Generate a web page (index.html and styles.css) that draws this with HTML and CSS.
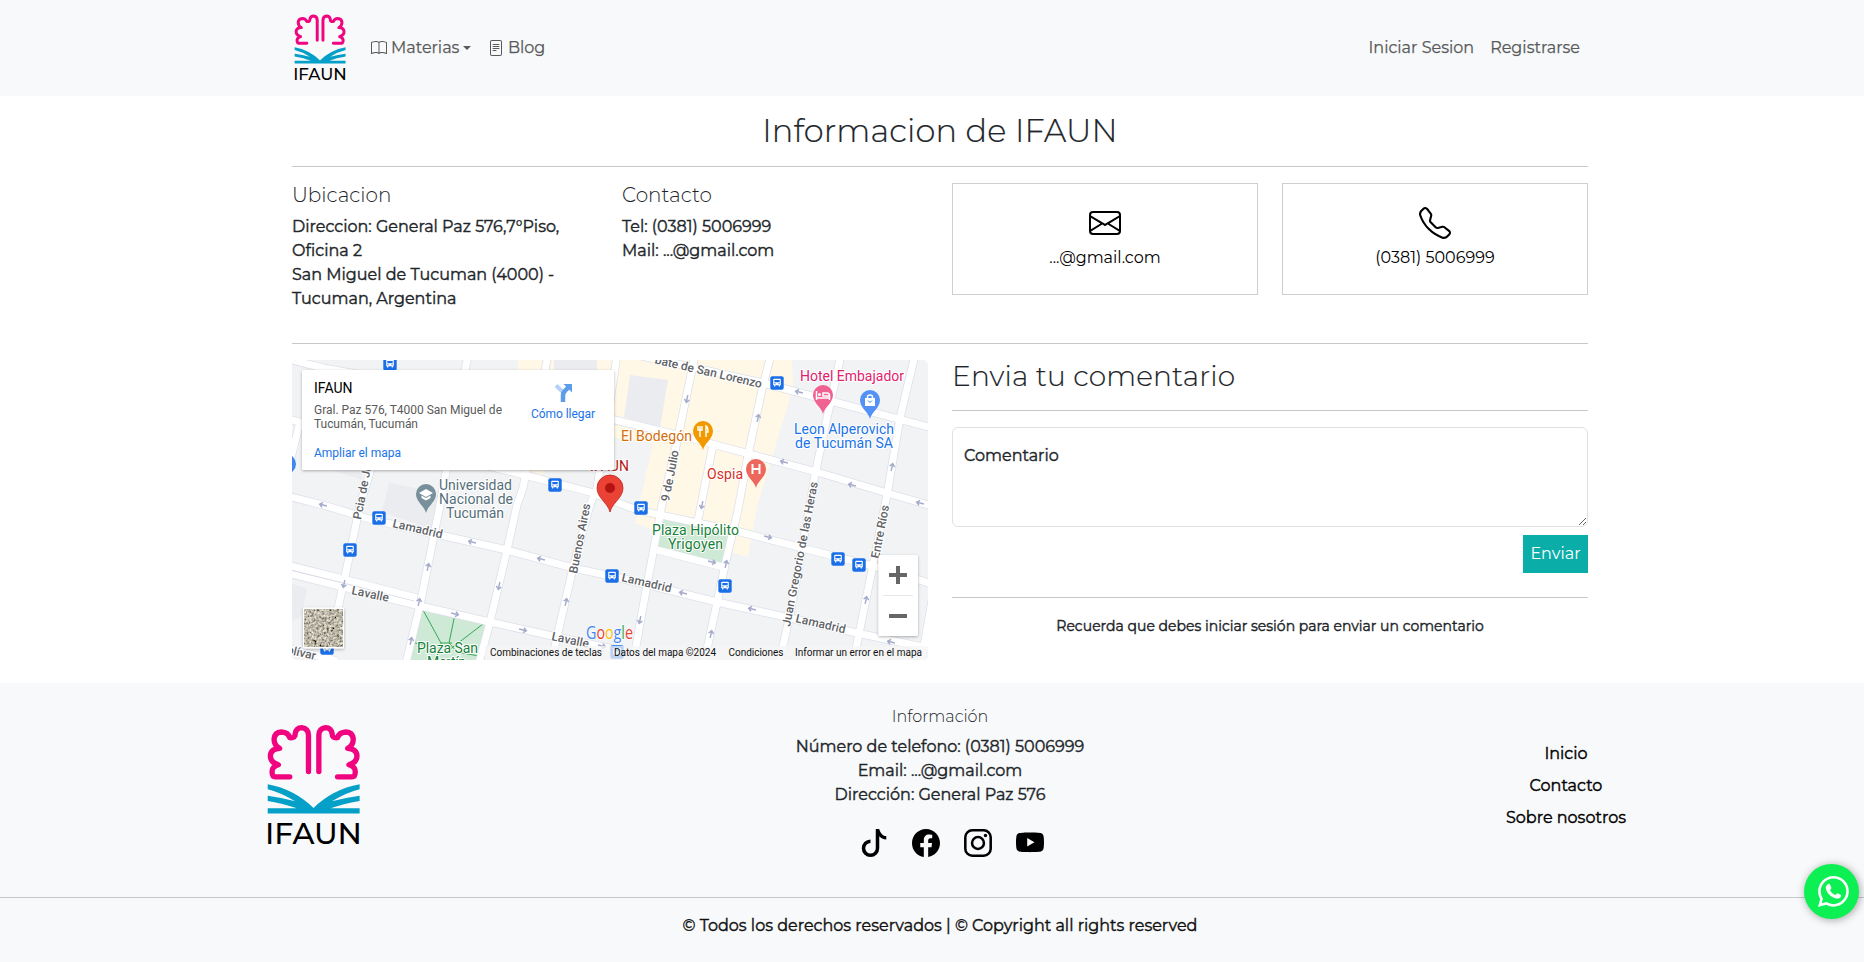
FILE: index.html
```html
<!DOCTYPE html>
<html lang="es">
<head>
<meta charset="utf-8">
<title>IFAUN</title>
<link rel="stylesheet" href="styles.css">
</head>
<body>
<svg width="0" height="0" class="defs" aria-hidden="true">
  <defs>
    <symbol id="logo" viewBox="83 73 278 362">
      <g fill="none" stroke="#f0047f" stroke-width="16" stroke-linecap="round" stroke-linejoin="round">
        <path id="half" d="M151 231H108Q98 231 98 215Q98 201 117 195Q93 188 93 169Q93 148 121 146Q104 138 104 118Q106 98 126 97Q146 98 151 114Q168 116 167 103Q170 84 187 84Q206 86 207 106V215"/>
        <use href="#half" transform="translate(445 0) scale(-1 1)"/>
      </g>
      <path fill="#04a0c8" d="M85 253Q165 268 222 324Q279 268 360 253V268Q320 278 277 304Q318 294 360 288V303Q310 312 273 325H360V341H85V325H172Q135 312 85 303V288Q127 294 167 304Q125 278 85 268Z"/>
      <text x="77" y="432" font-size="88" font-weight="550" fill="#000" textLength="290" lengthAdjust="spacingAndGlyphs">IFAUN</text>
    </symbol>
    <symbol id="bus" viewBox="0 0 14 14">
      <rect x=".3" y=".3" width="13.4" height="13.4" rx="2" fill="#1a6fe8"/>
      <path fill="#fff" d="M4.2 2.7h5.6q1 0 1 1v5.6H9.9v1.2H8.7V9.3H5.3v1.2H4.1V9.3h-.9V3.700q0-1 1-1z"/>
      <path fill="#1a6fe8" d="M4.300 3.900h5.400v2.400H4.300zM4.300 7.300h1.200v1H4.300zM8.500 7.300h1.200v1H8.500z"/>
    </symbol>
    <path id="arrow" d="M-4 0H3M.5-2.500 3.400 0 .5 2.500" fill="none" stroke="#a5abcb" stroke-width="1.500"/>
    <path id="pin" d="M0 19C-1.500 12-10 8-10 0A10 10 0 0 1 10 0C10 8 1.500 12 0 19Z"/>
  </defs>
</svg>

<nav class="navbar">
  <a class="brand"><svg class="logo-sm"><use href="#logo"/></svg></a>
  <a class="nav-link"><svg class="i16" viewBox="0 0 16 16"><path d="M1 2.828c.885-.37 2.154-.769 3.388-.893 1.330-.134 2.458.063 3.112.752v9.746c-.935-.53-2.120-.603-3.213-.493-1.180.12-2.370.461-3.287.811V2.828zm7.500-.141c.654-.689 1.782-.886 3.112-.752 1.234.124 2.503.523 3.388.893v9.923c-.918-.35-2.107-.692-3.287-.81-1.094-.111-2.278-.039-3.213.492V2.687zM8 1.783C7.015.936 5.587.81 4.287.94c-1.514.153-3.042.672-3.994 1.105A.5.5 0 0 0 0 2.500v11a.5.5 0 0 0 .707.455c.882-.4 2.303-.881 3.680-1.020 1.409-.142 2.590.087 3.223.877a.5.5 0 0 0 .78 0c.633-.79 1.814-1.019 3.222-.877 1.378.139 2.800.62 3.681 1.020A.5.5 0 0 0 16 13.500v-11a.5.5 0 0 0-.293-.455c-.952-.433-2.480-.952-3.994-1.105C10.413.809 8.985.936 8 1.783z"/></svg><span>Materias</span><i class="caret"></i></a>
  <a class="nav-link nav-blog"><svg class="i16" viewBox="0 0 16 16"><path d="M5 4a.5.5 0 0 0 0 1h6a.5.5 0 0 0 0-1H5zm-.5 2.500A.5.5 0 0 1 5 6h6a.5.5 0 0 1 0 1H5a.5.5 0 0 1-.5-.5zM5 8a.5.5 0 0 0 0 1h6a.5.5 0 0 0 0-1H5zm0 2a.5.5 0 0 0 0 1h3a.5.5 0 0 0 0-1H5z"/><path d="M2 2a2 2 0 0 1 2-2h8a2 2 0 0 1 2 2v12a2 2 0 0 1-2 2H4a2 2 0 0 1-2-2V2zm10-1H4a1 1 0 0 0-1 1v12a1 1 0 0 0 1 1h8a1 1 0 0 0 1-1V2a1 1 0 0 0-1-1z"/></svg><span>Blog</span></a>
  <div class="nav-right"><a>Iniciar Sesion</a><a>Registrarse</a></div>
</nav>

<main class="container">
  <h2 class="title">Informacion de IFAUN</h2>
  <hr>
  <section class="info">
    <div>
      <h5>Ubicacion</h5>
      <p>Direccion: General Paz 576,7°Piso, Oficina 2</p>
      <p>San Miguel de Tucuman (4000) - Tucuman, Argentina</p>
    </div>
    <div>
      <h5>Contacto</h5>
      <p>Tel: (0381) 5006999</p>
      <p>Mail: ...@gmail.com</p>
    </div>
    <a class="card">
      <svg class="i32" viewBox="0 0 16 16"><path d="M0 4a2 2 0 0 1 2-2h12a2 2 0 0 1 2 2v8a2 2 0 0 1-2 2H2a2 2 0 0 1-2-2V4Zm2-1a1 1 0 0 0-1 1v.217l7 4.200 7-4.200V4a1 1 0 0 0-1-1H2Zm13 2.383-4.708 2.825L15 11.105V5.383Zm-.034 6.876-5.640-3.471L8 9.583l-1.326-.795-5.640 3.470A1 1 0 0 0 2 13h12a1 1 0 0 0 .966-.741ZM1 11.105l4.708-2.897L1 5.383v5.722Z"/></svg>
      <span>...@gmail.com</span>
    </a>
    <a class="card">
      <svg class="i32" viewBox="0 0 16 16"><path d="M3.654 1.328a.678.678 0 0 0-1.015-.063L1.605 2.300c-.483.484-.661 1.169-.45 1.770a17.568 17.568 0 0 0 4.168 6.608 17.569 17.569 0 0 0 6.608 4.168c.601.211 1.286.033 1.770-.45l1.034-1.034a.678.678 0 0 0-.063-1.015l-2.307-1.794a.678.678 0 0 0-.58-.122l-2.190.547a1.745 1.745 0 0 1-1.657-.459L5.482 8.062a1.745 1.745 0 0 1-.46-1.657l.548-2.190a.678.678 0 0 0-.122-.58L3.654 1.328zM1.884.511a1.745 1.745 0 0 1 2.612.163L6.290 2.980c.329.423.445.974.315 1.494l-.547 2.190a.678.678 0 0 0 .178.643l2.457 2.457a.678.678 0 0 0 .644.178l2.189-.547a1.745 1.745 0 0 1 1.494.315l2.306 1.794c.829.645.905 1.870.163 2.611l-1.034 1.034c-.74.74-1.846 1.065-2.877.702a18.634 18.634 0 0 1-7.010-4.420 18.634 18.634 0 0 1-4.420-7.009c-.362-1.030-.037-2.137.703-2.877L1.885.511z"/></svg>
      <span>(0381) 5006999</span>
    </a>
  </section>
  <hr>
  <section class="lower">
    <svg class="map" viewBox="0 0 636 300">
      <defs>
        <filter id="sat" x="0" y="0" width="1" height="1"><feTurbulence type="fractalNoise" baseFrequency=".4" numOctaves="3" seed="4"/><feColorMatrix values="1.2 .8 0 0 -.5  1.1 .8 0 0 -.48  1 .7 0 0 -.46  0 0 0 0 1"/></filter>
        <filter id="shade" x="-20%" y="-20%" width="140%" height="140%"><feDropShadow dx="0" dy="1" stdDeviation="1.500" flood-opacity=".3"/></filter>
        <g id="roads">
          <path d="M-5 2 0 0 31 8 323 60 398 78 525 112 595 133 640 146M340-6 471 23 640 68M-5 59 221 112 298 132 345 150 448 172 518 190 585 207 640 224M-5 136 31 145 81 160 148 175 215 190 281 208 328 218 425 242 498 258 565 273 640 289M-5 205 51 219 125 238M-5 213 51 227 128 246 198 262 265 277 335 292M-5 288 45 301M365 190 431 207"/>
          <path d="M101-5 78 112 68 145 51 226 46 248 34 303M8 62-4 110M176-5 151 128 148 145 128 245 114 303M256-5 231 128 225 145 215 190 198 262 187 303M325-5 305 128 298 145 281 208 265 277 259 303M403-5 385 82 370 145 355 225 341 303M421 85 406 160M479-5 471 25 456 95 446 150 433 205 426 238 412 303M549-5 535 58 523 115 518 145 498 255 487 303M623-5 608 58 595 135 581 205 561 303M640 240 629 303"/>
        </g>
      </defs>
      <rect width="636" height="300" fill="#f1f3f5"/>
      <path fill="#fff8e7" d="M226 0H500L501 28 465 147 456 197 437 192 433 212 360 193 362 170 343 163 361 83 323 78 300 74V12H226ZM236 110H252L248 121 236 118Z"/>
      <path fill="#ebecf0" d="M338 15 376 20 368 68 332 57ZM97 123 151 133 143 170 90 152ZM40 110H70V120ZM0 224 15 228 10 255 0 262ZM262 0H305V12H262Z"/>
      <path fill="#cee9d6" d="M373 155 441 171 431 203 364 188ZM129 247 196 263 186 300H117Z"/>
      <path fill="none" stroke="#34a853" d="M131 250 149 283 144 300M163 254 157 283 165 292 187 296M191 264 157 290M149 283H160M119 282 132 285"/>
      <use href="#roads" fill="none" stroke="#dde0e9" stroke-width="8.500"/>
      <use href="#roads" fill="none" stroke="#fff" stroke-width="7"/>
      <path stroke="#dde0e9" d="M-2 210 51 223 122 241" fill="none"/>
      <g>
        <use href="#arrow" transform="translate(31 145) rotate(193)"/><use href="#arrow" transform="translate(180 182) rotate(193)"/><use href="#arrow" transform="translate(249 199) rotate(193)"/><use href="#arrow" transform="translate(136 207) rotate(-78)"/><use href="#arrow" transform="translate(207 226) rotate(102)"/><use href="#arrow" transform="translate(274 242) rotate(-78)"/><use href="#arrow" transform="translate(52 224) rotate(102)"/><use href="#arrow" transform="translate(127 242) rotate(-78)"/><use href="#arrow" transform="translate(163 254) rotate(13)"/><use href="#arrow" transform="translate(231 270) rotate(13)"/><use href="#arrow" transform="translate(119 281) rotate(-78)"/><use href="#arrow" transform="translate(310 286) rotate(13)"/>
        <use href="#arrow" transform="translate(395 39) rotate(102)"/><use href="#arrow" transform="translate(466 58) rotate(-78)"/><use href="#arrow" transform="translate(507 32) rotate(193)"/><use href="#arrow" transform="translate(492 102) rotate(193)"/><use href="#arrow" transform="translate(560 125) rotate(193)"/><use href="#arrow" transform="translate(628 143) rotate(193)"/><use href="#arrow" transform="translate(600 107) rotate(-78)"/><use href="#arrow" transform="translate(410 145) rotate(102)"/><use href="#arrow" transform="translate(476 177) rotate(13)"/><use href="#arrow" transform="translate(420 202) rotate(13)"/><use href="#arrow" transform="translate(434 204) rotate(-78)"/><use href="#arrow" transform="translate(391 233) rotate(193)"/><use href="#arrow" transform="translate(460 249) rotate(193)"/><use href="#arrow" transform="translate(348 260) rotate(102)"/><use href="#arrow" transform="translate(419 274) rotate(-78)"/><use href="#arrow" transform="translate(574 240) rotate(-78)"/><use href="#arrow" transform="translate(599 282) rotate(193)"/>
      </g>
      <g class="street">
        <text transform="translate(469 28) rotate(13)" text-anchor="end">bate de San Lorenzo</text>
        <text transform="translate(100 167) rotate(13)" textLength="51">Lamadrid</text>
        <text transform="translate(59 234) rotate(12)" textLength="38">Lavalle</text>
        <text transform="translate(259 280) rotate(12)" textLength="38">Lavalle</text>
        <text transform="translate(329 221) rotate(13)" textLength="51">Lamadrid</text>
        <text transform="translate(503 262) rotate(13)" textLength="51">Lamadrid</text>
        <text transform="translate(23 300) rotate(13)" text-anchor="end">Bolívar</text>
        <text transform="translate(69 160) rotate(-79)">Pcia de Jujuy</text>
        <text transform="translate(285 214) rotate(-79)" textLength="71">Buenos Aires</text>
        <text transform="translate(377 142) rotate(-79)" textLength="52">9 de Julio</text>
        <text transform="translate(498 267) rotate(-79)" textLength="147">Juan Gregorio de las Heras</text>
        <text transform="translate(587 199) rotate(-79)" textLength="54">Entre Ríos</text>
      </g>
      <use href="#bus" x="91" y="-3" width="14" height="14"/><use href="#bus" x="256" y="118" width="14" height="14"/><use href="#bus" x="80" y="151" width="14" height="14"/><use href="#bus" x="51" y="183" width="14" height="14"/><use href="#bus" x="313" y="209" width="14" height="14"/><use href="#bus" x="28" y="281" width="14" height="14"/><use href="#bus" x="478" y="16" width="14" height="14"/><use href="#bus" x="342" y="141" width="14" height="14"/><use href="#bus" x="426" y="219" width="14" height="14"/><use href="#bus" x="539" y="192" width="14" height="14"/><use href="#bus" x="560" y="198" width="14" height="14"/><use href="#bus" x="318" y="285" width="14" height="14"/>
      <circle cx="-6" cy="104" r="10" fill="#4285f4"/>
      <g class="pins">
        <use href="#pin" x="134" y="134" fill="#78909c"/><path fill="#fff" d="M134 129 141 133 134 137 127 133ZM129.500 135.500 134 138 138.500 135.500V138L134 140.500 129.500 138Z"/>
        <use href="#pin" x="411" y="71" fill="#f29900"/><path stroke="#fff" fill="none" stroke-width="1.400" d="M408 66V77M406 66V70H410V66M414 77V66Q416 67 416 72H414"/>
        <use href="#pin" x="464" y="109" fill="#ee675c"/><path stroke="#fff" fill="none" stroke-width="2" d="M460.500 104V114M467.500 104V114M460.500 109H467.500"/>
        <use href="#pin" x="531" y="35" fill="#f06292"/><path stroke="#fff" fill="none" stroke-width="1.500" d="M524.500 31V40M524.500 38H537.500V40V36H531V33H535Q537.500 33 537.500 36"/><circle cx="527.500" cy="34.500" r="1.500" fill="#fff"/>
        <use href="#pin" x="578" y="40" fill="#5491f5"/><path fill="#fff" d="M573 38H583V46H573Z"/><path stroke="#fff" fill="none" stroke-width="1.400" d="M575.500 39V37Q575.500 35 578 35T580.500 37V39"/><path d="M576 40.500Q578 44 580 40.500" fill="none" stroke="#5491f5"/>
        <path d="M318 152C316 143 305 138 305 128A13 13 0 0 1 331 128C331 138 320 143 318 152Z" fill="#ea4335" stroke="#c5221f" stroke-width=".8"/><circle cx="318" cy="128" r="5" fill="#b31412"/>
      </g>
      <g class="poi">
        <text x="147" y="130" textLength="73" fill="#546e7a">Universidad</text><text x="147" y="144" textLength="74" fill="#546e7a">Nacional de</text><text x="154" y="158" textLength="58" fill="#546e7a">Tucumán</text>
        <text x="329" y="81" textLength="71" fill="#d56e0c">El Bodegón</text>
        <text x="415" y="119" textLength="36" fill="#d93025">Ospia</text>
        <text x="508" y="21" textLength="104" fill="#e0216c">Hotel Embajador</text>
        <text x="502" y="74" textLength="100" fill="#1a73e8">Leon Alperovich</text><text x="503" y="88" textLength="98" fill="#1a73e8">de Tucumán SA</text>
        <text x="360" y="175" textLength="87" fill="#188038">Plaza Hipólito</text><text x="376" y="189" textLength="55" fill="#188038">Yrigoyen</text>
        <text x="125" y="293" textLength="61" fill="#188038">Plaza San</text><text x="135" y="307" textLength="39" fill="#188038">Martín</text>
        <text x="298" y="111" textLength="39" fill="#b31412">IFAUN</text>
      </g>
      <text class="google" x="294" y="279" textLength="47" lengthAdjust="spacingAndGlyphs"><tspan fill="#4285f4">G</tspan><tspan fill="#ea4335">o</tspan><tspan fill="#fbbc04">o</tspan><tspan fill="#4285f4">g</tspan><tspan fill="#34a853">l</tspan><tspan fill="#ea4335">e</tspan></text>
      <path fill="#f5f5f5" fill-opacity=".75" d="M193 286H636V300H193Z"/>
      <g class="attrib">
        <text x="198" y="296" textLength="112">Combinaciones de teclas</text><text x="322" y="296" textLength="102">Datos del mapa ©2024</text><text x="436.500" y="296" textLength="55">Condiciones</text><text x="503" y="296" textLength="127">Informar un error en el mapa</text>
      </g>
      <g filter="url(#shade)"><rect x="10" y="10" width="312" height="100" rx="1.500" fill="#fff"/></g>
      <g class="place">
        <text x="22" y="32.500" font-size="14" fill="#000" textLength="38.500">IFAUN</text>
        <text x="22" y="54" fill="#5b5b5b" textLength="188">Gral. Paz 576, T4000 San Miguel de</text>
        <text x="22" y="68" fill="#5b5b5b" textLength="104">Tucumán, Tucumán</text>
        <text x="22" y="97" fill="#1a73e8" textLength="87">Ampliar el mapa</text>
        <text x="239" y="58" fill="#1a73e8" textLength="64">Cómo llegar</text>
      </g>
      <path d="M264 25.500 271 32V37" fill="none" stroke="#b5d1f7" stroke-width="4"/><path d="M271 42V35Q271 32 277 27" fill="none" stroke="#5c9ce8" stroke-width="4.500"/><path fill="#5c9ce8" d="M271.500 24H280V32.500Z"/>
      <g filter="url(#shade)"><rect x="11" y="247.500" width="41" height="41" rx="1.500" fill="#fff"/><rect x="586.500" y="195" width="39.500" height="81" rx="2" fill="#fff"/></g>
      <rect x="12.500" y="249" width="38" height="38" filter="url(#sat)"/>
      <path d="M591 235.500H621" stroke="#e6e6e6"/>
      <path d="M597 215H615M606 206V224M597 256H615" stroke="#666" stroke-width="4"/>
    </svg>
    <div class="form">
      <h3>Envia tu comentario</h3>
      <hr>
      <textarea placeholder="Comentario"></textarea>
      <button>Enviar</button>
      <hr class="hr-form">
      <p class="note">Recuerda que debes iniciar sesión para enviar un comentario</p>
    </div>
  </section>
</main>

<footer>
  <div class="foot">
    <div class="foot-logo"><svg class="logo-lg"><use href="#logo"/></svg></div>
    <div class="foot-info">
      <h6>Información</h6>
      <p>Número de telefono: (0381) 5006999</p>
      <p>Email: ...@gmail.com</p>
      <p>Dirección: General Paz 576</p>
      <div class="social">
        <svg viewBox="0 0 16 16"><path d="M9 0h1.980c.144.715.54 1.617 1.235 2.512C12.895 3.389 13.797 4 15 4v2c-1.753 0-3.070-.814-4-1.829V11a5 5 0 1 1-5-5v2a3 3 0 1 0 3 3V0Z"/></svg>
        <svg viewBox="0 0 16 16"><path d="M16 8.049c0-4.446-3.582-8.050-8-8.050C3.580 0-.002 3.603-.002 8.050c0 4.017 2.926 7.347 6.750 7.951v-5.625h-2.030V8.050H6.750V6.275c0-2.017 1.195-3.131 3.022-3.131.876 0 1.791.157 1.791.157v1.980h-1.009c-.993 0-1.303.621-1.303 1.258v1.510h2.218l-.354 2.326H9.250V16c3.824-.604 6.750-3.934 6.750-7.951z"/></svg>
        <svg viewBox="0 0 16 16"><rect x=".75" y=".75" width="14.500" height="14.500" rx="4" fill="none" stroke="#000" stroke-width="1.450"/><circle cx="8" cy="8" r="3.400" fill="none" stroke="#000" stroke-width="1.450"/><circle cx="12.270" cy="3.730" r=".96"/></svg>
        <svg viewBox="0 0 16 16"><path d="M8.051 1.999h.089c.822.003 4.987.033 6.110.335a2.010 2.010 0 0 1 1.415 1.420c.101.38.172.883.22 1.402l.010.104.022.26.008.104c.065.914.073 1.770.074 1.957v.075c-.001.194-.010 1.108-.082 2.060l-.008.105-.009.104c-.050.572-.124 1.140-.235 1.558a2.007 2.007 0 0 1-1.415 1.420c-1.160.312-5.569.334-6.180.335h-.142c-.309 0-1.587-.006-2.927-.052l-.17-.006-.087-.004-.171-.007-.171-.007c-1.110-.049-2.167-.128-2.654-.26a2.007 2.007 0 0 1-1.415-1.419c-.111-.417-.185-.986-.235-1.558L.09 9.820l-.008-.104A31.400 31.400 0 0 1 0 7.680v-.123c.002-.215.010-.958.064-1.778l.007-.103.003-.052.008-.104.022-.26.010-.104c.048-.519.119-1.023.22-1.402a2.007 2.007 0 0 1 1.415-1.420c.487-.13 1.544-.21 2.654-.26l.17-.007.172-.006.086-.003.171-.007A99.788 99.788 0 0 1 7.858 2h.193zM6.400 5.209v4.818l4.157-2.408L6.400 5.209z"/></svg>
      </div>
    </div>
    <div class="foot-links"><a>Inicio</a><a>Contacto</a><a>Sobre nosotros</a></div>
  </div>
  <hr>
  <p class="copy">© Todos los derechos reservados | © Copyright all rights reserved</p>
</footer>
<a class="whatsapp"><svg viewBox="0 0 16 16" fill="#fff"><path d="M13.601 2.326A7.854 7.854 0 0 0 7.994 0C3.627 0 .068 3.558.064 7.926c0 1.399.366 2.760 1.057 3.965L0 16l4.204-1.102a7.933 7.933 0 0 0 3.790.965h.004c4.368 0 7.926-3.558 7.930-7.930A7.898 7.898 0 0 0 13.600 2.326zM7.994 14.521a6.573 6.573 0 0 1-3.356-.92l-.24-.144-2.494.654.666-2.433-.156-.251a6.560 6.560 0 0 1-1.007-3.505c0-3.626 2.957-6.584 6.591-6.584a6.560 6.560 0 0 1 4.660 1.931 6.557 6.557 0 0 1 1.928 4.660c-.004 3.639-2.961 6.592-6.592 6.592z"/><path d="M5.100 4.200C5.500 4 6 3.950 6.200 4.400L6.900 6.100C7 6.500 6.500 7 6.200 7.350C6.900 8.600 7.800 9.300 9 9.800C9.400 9.500 9.700 8.900 10.100 8.900L11.900 9.800C12.100 10.700 11.300 11.600 10 11.700C7.200 11.500 4.300 8.700 4 6.200C4 5.300 4.500 4.600 5.100 4.200Z"/></svg></a>
</body>
</html>
```
FILE: styles.css
```css
*{box-sizing:border-box}
html{overflow:hidden}
body{margin:0;width:1864px;height:962px;overflow:hidden;position:relative;font:400 16px/24px Montserrat,Inter,sans-serif;color:#212529;background:#fff}
h2,h3,h5,h6,p{margin:0}
h2,h3,h5,h6{font-weight:300}
hr{margin:0;border:0;border-top:1px solid #c7c8c9}
svg{display:block}
.defs{position:absolute}

.navbar{height:96px;width:1880px;padding:0 300px 0 294px;display:flex;align-items:center;background:#f8f9fa;color:#595a5b;-webkit-text-stroke:.25px}
.logo-sm{width:52px;height:67px;margin-bottom:1px}
.logo-lg{width:93px;height:121px}
.logo-sm,.logo-lg{-webkit-text-stroke:0}
.i16{width:16px;height:16px;fill:#595a5b}
.brand{margin-right:25px}
.nav-link{display:flex;align-items:center;gap:4px}
.nav-blog{margin-left:16.500px}
.caret{border:4.500px solid transparent;border-top-color:#595a5b;border-bottom:0}
.nav-right{margin-left:auto;display:flex;gap:16px}

.container{width:1296px;margin-left:292px}
.title{height:70px;padding-top:14px;font-size:32px;line-height:42px;letter-spacing:.15px;text-align:center;-webkit-text-stroke:.2px}
.info{height:176px;display:grid;grid-template-columns:repeat(4,306px);gap:24px;padding-top:16px}
.info p,.note,.foot p,.foot-links,.copy,textarea{-webkit-text-stroke:.4px}
h5{font-size:20px;line-height:24px;margin-bottom:8px}
.card{height:112px;border:1px solid #cdcfd0;display:flex;flex-direction:column;align-items:center;padding-top:23px;gap:7px;color:#000}
.card .i32{width:32px;height:32px;fill:#000}
.lower{display:grid;grid-template-columns:636px 636px;gap:24px;padding-top:16px;height:339px}
.map{width:636px;height:300px;border-radius:5px;font-family:Roboto,sans-serif}
.street text{font-size:12px;font-weight:500;fill:#5f6368;stroke:#fff;stroke-width:2px;paint-order:stroke}
.poi text{font-size:14px;stroke:#fff;stroke-width:2px;paint-order:stroke}
.google{font:500 18px "Open Sans",sans-serif;stroke:#fff;stroke-width:1px;paint-order:stroke}
.attrib{font-size:10px;fill:#111}
.place{font-size:12px}

.form{display:flex;flex-direction:column}
h3{font-size:28px;line-height:32px;height:50px;letter-spacing:.15px;-webkit-text-stroke:.15px}
textarea{margin-top:16px;height:100px;flex:none;border:1px solid #dee2e6;border-radius:6px;padding:16px 11px;font:inherit;resize:vertical;background:#fff}
textarea::placeholder{color:#212529;opacity:1}
button{align-self:flex-end;margin-top:8px;width:65px;height:38px;padding:0;border:0;background:#0bada9;color:#fff;font:400 16px/36px Montserrat,Inter,sans-serif}
.hr-form{margin-top:24px}
.note{padding-top:16px;font-size:14px;text-align:center}

footer{height:279px;background:#f8f9fa}
.foot{height:214px;width:1880px;display:grid;grid-template-columns:628px 624px 628px;text-align:center}
.foot-logo{padding:41px 0 0 267px}
.foot-info{padding-top:24px}
h6{font-size:16px;line-height:19px;margin-bottom:9px}
.social{display:flex;justify-content:center;margin-top:22px}
.social svg{width:28px;height:28px;margin-left:24px}
.foot-links{padding-top:59px;display:flex;flex-direction:column;gap:8px;color:#000}
.copy{width:1880px;text-align:center;padding-top:16px;color:#111}
.whatsapp{position:absolute;left:1804px;top:864px;width:55px;height:55px;border-radius:50%;background:#0df053;box-shadow:1px 1px 8px rgba(0,0,0,.35)}
.whatsapp svg{width:31px;height:31px;margin:12px 0 0 14px}
```
